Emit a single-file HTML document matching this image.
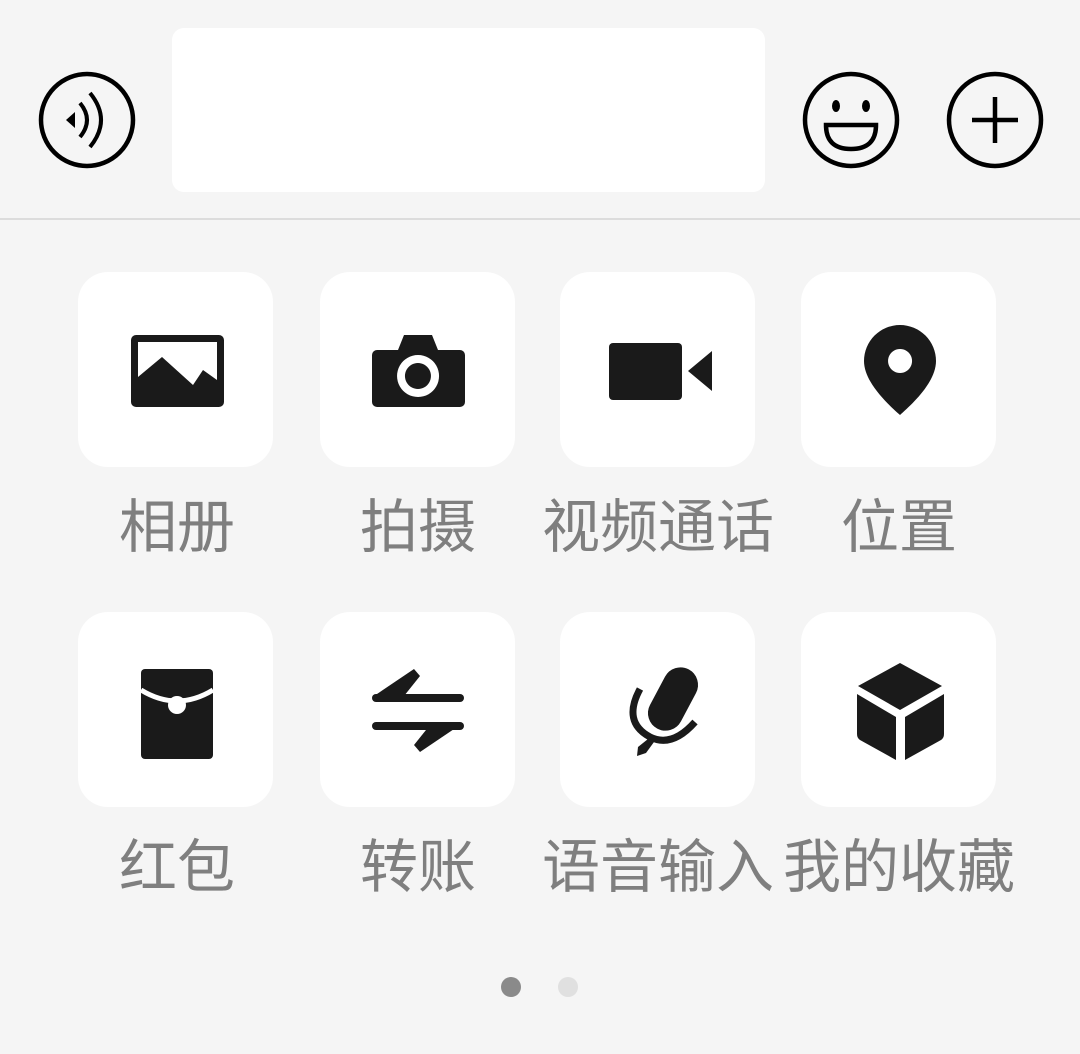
<!DOCTYPE html>
<html><head><meta charset="utf-8"><style>
html,body{margin:0;padding:0;width:1080px;height:1054px;background:#f5f5f5;overflow:hidden;position:relative}
.l{position:absolute;width:260px;text-align:center;font-family:"Liberation Sans","Noto Sans CJK SC",sans-serif;font-size:58px;color:#7f7f7f;line-height:60px;letter-spacing:0px}
svg{position:absolute;left:0;top:0}
</style></head><body>
<svg width="1080" height="1054" viewBox="0 0 1080 1054">
<rect x="172" y="28" width="593" height="164" rx="12" fill="#fff"/>
<rect x="0" y="218" width="1080" height="2" fill="#dcdcdc"/>
<g fill="none" stroke="#000" stroke-width="4.5">
<circle cx="87" cy="120" r="46"/>
<circle cx="851" cy="120" r="46"/>
<circle cx="995" cy="120" r="46"/>
<path d="M972 120h46M995 97v46"/>
<path d="M826 125h50q0 24 -25 24q-25 0 -25 -24z"/>
</g>
<g fill="none" stroke="#000" stroke-width="4">
<path d="M80 103q14 17 0 34"/><path d="M90 93q22 27 0 54"/>
</g>
<path d="M66 120l9-8v16z" fill="#000"/>
<ellipse cx="836" cy="106" rx="4" ry="6" fill="#000"/><ellipse cx="866" cy="106" rx="4" ry="6" fill="#000"/>
<g fill="#fff">
<rect x="78" y="272" width="195" height="195" rx="30"/><rect x="320" y="272" width="195" height="195" rx="30"/>
<rect x="560" y="272" width="195" height="195" rx="30"/><rect x="801" y="272" width="195" height="195" rx="30"/>
<rect x="78" y="612" width="195" height="195" rx="30"/><rect x="320" y="612" width="195" height="195" rx="30"/>
<rect x="560" y="612" width="195" height="195" rx="30"/><rect x="801" y="612" width="195" height="195" rx="30"/>
</g>
<g fill="#1a1a1a">
<path fill-rule="evenodd" d="M136 335h83a5 5 0 0 1 5 5v62a5 5 0 0 1-5 5h-83a5 5 0 0 1-5-5v-62a5 5 0 0 1 5-5zM138 342v35l24-20 31 28 10-15 14 10v-38z"/>
<path fill-rule="evenodd" d="M404 335h28l6 15h22a5 5 0 0 1 5 5v47a5 5 0 0 1-5 5h-83a5 5 0 0 1-5-5v-47a5 5 0 0 1 5-5h21zM418 355a21 21 0 1 0 0.1 0zM418 363a13 13 0 1 1-0.1 0z"/>
<rect x="609" y="343" width="73" height="57" rx="4"/><path d="M688 371l24-20v40z"/>
<path fill-rule="evenodd" d="M900 325a36 36 0 0 1 36 36c0 22-26 45-36 54c-10-9-36-32-36-54a36 36 0 0 1 36-36zM900 349a12 12 0 1 0 0.1 0z"/>
<rect x="141" y="669" width="72" height="90" rx="4"/>
<path d="M376 694h84a4 4 0 0 1 0 8h-84a4 4 0 0 1 0-8z"/>
<path d="M414 669L374 696h30l16-20z"/>
<path d="M376 722h84a4 4 0 0 1 0 8h-84a4 4 0 0 1 0-8z"/>
<path d="M420 752L460 725h-30l-16 20z"/>
<path d="M900 663l42 23-42 24-42-24z"/><path d="M857 694l39 23v43l-36-20q-3-2-3-6z"/><path d="M944 694l-39 23v43l36-20q3-2 3-6z"/>
</g>
<path d="M141 690q36 22 72 0" fill="none" stroke="#fff" stroke-width="5"/>
<circle cx="177" cy="705" r="9" fill="#fff"/>
<rect x="653" y="663" width="40" height="72" rx="20" transform="rotate(28 673 699)" fill="#1a1a1a" stroke="#fff" stroke-width="5"/>
<path d="M640 689Q622 722 650 737Q672 748 695 722" fill="none" stroke="#1a1a1a" stroke-width="7"/>
<path d="M648 739l6 3-8 11-9 3 1-9z" fill="#1a1a1a"/>
<circle cx="511" cy="987" r="10" fill="#8a8a8a"/><circle cx="568" cy="987" r="10" fill="#e0e0e0"/>
</svg>
<div class="l" style="left:47px;top:498px">相册</div>
<div class="l" style="left:288px;top:498px">拍摄</div>
<div class="l" style="left:528px;top:498px">视频通话</div>
<div class="l" style="left:769px;top:498px">位置</div>
<div class="l" style="left:47px;top:838px">红包</div>
<div class="l" style="left:288px;top:838px">转账</div>
<div class="l" style="left:528px;top:838px">语音输入</div>
<div class="l" style="left:769px;top:838px">我的收藏</div>
</body></html>
